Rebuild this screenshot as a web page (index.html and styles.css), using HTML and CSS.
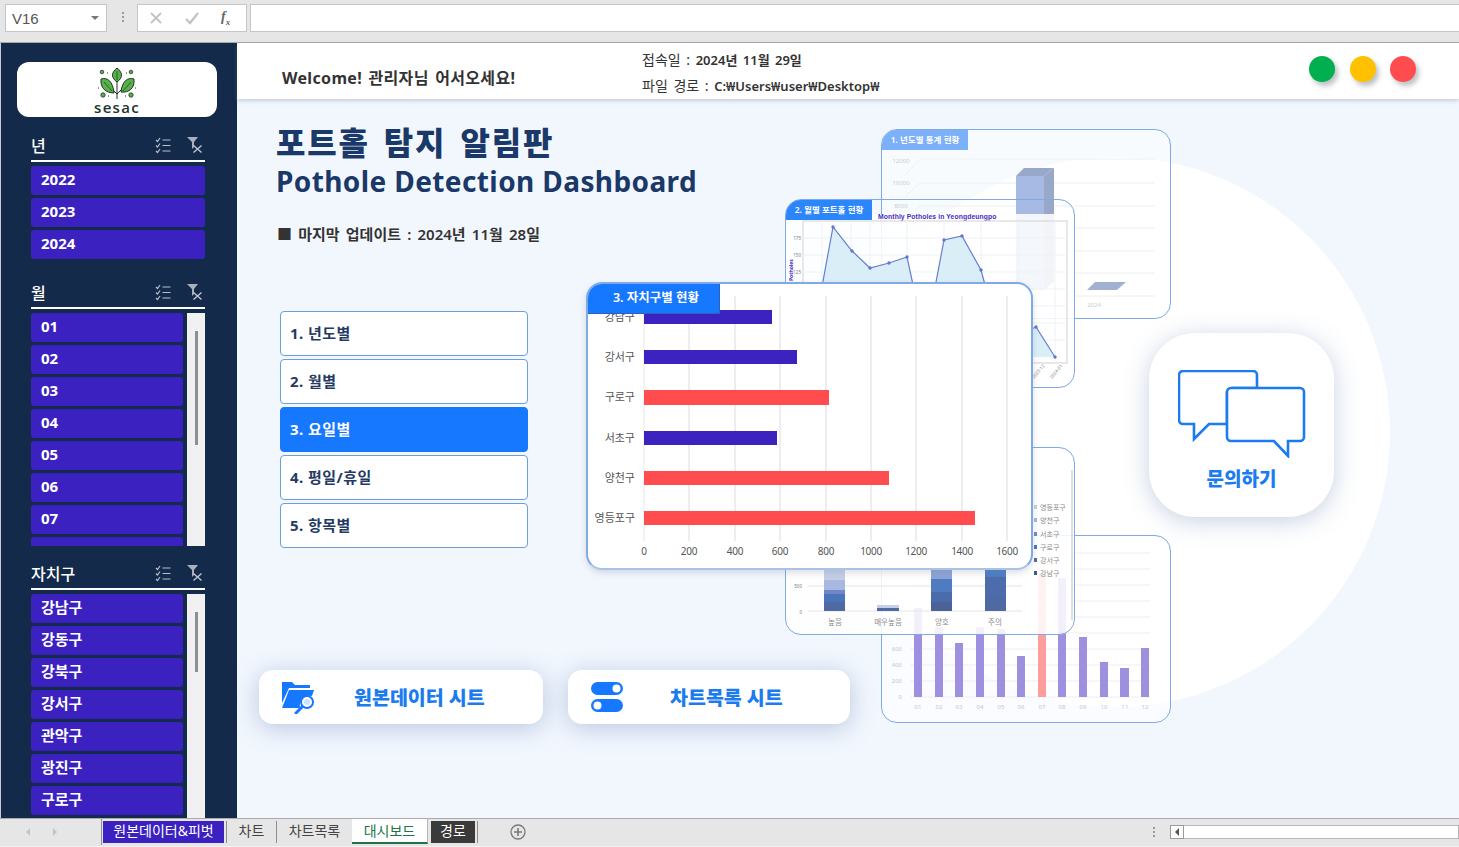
FILE: index.html
```html
<!DOCTYPE html>
<html lang="ko">
  <head>
    <meta charset="UTF-8" />
    <meta name="viewport" content="width=device-width, initial-scale=1.0" />
    <title>Pothole Detection Dashboard</title>
    <link rel="stylesheet" href="styles.css">
  </head>
  <body>
    <svg class="icon-defs" width="0" height="0">
      <defs>
        <g id="icon-multi">
          <path d="M1 3l1.500 1.500 2.500-3.500M1 8.500l1.500 1.500 2.500-3.500M1 14l1.500 1.500 2.500-3.500" fill="none" stroke="#b9bfc9" stroke-width="1.200" />
          <path d="M7.500 3h8M7.500 8.500h8M7.500 14h8" stroke="#b9bfc9" stroke-width="1.200" />
        </g>
        <g id="icon-clear">
          <path d="M0 0h11l-4 5v5l-2 2v-7z" fill="#aab0ba" />
          <path d="M6.500 8.500l8 7M14.500 8.500l-8 7" stroke="#c4c9d1" stroke-width="1.300" />
        </g>
      </defs>
    </svg>

    <div class="formula-bar">
      <div class="name-box"><span>V16</span><i class="caret"></i></div>
      <div class="grip"></div>
      <div class="formula-btns">
        <svg width="14" height="14" viewBox="0 0 14 14"><path d="M2 2l10 10M12 2L2 12" stroke="#c2c2c2" stroke-width="1.800" /></svg>
        <svg width="16" height="14" viewBox="0 0 16 14"><path d="M2 8l4 4 8-10" fill="none" stroke="#c2c2c2" stroke-width="2.200" /></svg>
        <span class="fx">f<sub>x</sub></span>
      </div>
      <div class="formula-input"></div>
    </div>

    <div class="sheet">
      <aside class="sidebar">
        <div class="logo-card">
          <svg width="42" height="33" viewBox="0 0 42 33">
            <path d="M21 32V8M21 27L11 17M21 27l10-10" fill="none" stroke="#20352a" stroke-width="1" />
            <path d="M21 1c5 4 7 9 0 14c-7-5-5-10 0-14z" fill="#58b24a" stroke="#20352a" stroke-width="1" />
            <path d="M5 12c6-2 12 2 13 14c-8 0-14-5-13-14z" fill="#58b24a" stroke="#20352a" stroke-width="1" />
            <path d="M38 12c-6-2-12 2-13 13c8 1 14-4 13-13z" fill="#58b24a" stroke="#20352a" stroke-width="1" />
            <path d="M21 4v9M8 15l8 9M35 15l-8 9" stroke="#20352a" stroke-width=".7" />
            <circle cx="6" cy="5" r="1.800" fill="#58b24a" stroke="#20352a" stroke-width=".8" />
            <circle cx="35" cy="5" r="1.800" fill="#58b24a" stroke="#20352a" stroke-width=".8" />
            <circle cx="7" cy="28" r="2.200" fill="#58b24a" stroke="#20352a" stroke-width=".8" />
            <circle cx="35" cy="28" r="2.200" fill="#58b24a" stroke="#20352a" stroke-width=".8" />
            <path d="M11 6h1M30 6h1M2 21h1M12 29h1M29 29h1M39 21h1" stroke="#20352a" stroke-width="1" />
          </svg>
          <div class="logo-text">sesac</div>
        </div>

        <section class="slicer">
          <div class="slicer-head">
            <span>년</span>
            <div class="slicer-tools">
              <svg width="17" height="17"><use href="#icon-multi" /></svg>
              <svg width="16" height="16"><use href="#icon-clear" /></svg>
            </div>
          </div>
          <div class="slicer-items">
            <div class="slicer-item">2022</div>
            <div class="slicer-item">2023</div>
            <div class="slicer-item">2024</div>
          </div>
        </section>

        <section class="slicer slicer-month">
          <div class="slicer-head">
            <span>월</span>
            <div class="slicer-tools">
              <svg width="17" height="17"><use href="#icon-multi" /></svg>
              <svg width="16" height="16"><use href="#icon-clear" /></svg>
            </div>
          </div>
          <div class="slicer-scroll">
            <div class="slicer-items">
              <div class="slicer-item">01</div>
              <div class="slicer-item">02</div>
              <div class="slicer-item">03</div>
              <div class="slicer-item">04</div>
              <div class="slicer-item">05</div>
              <div class="slicer-item">06</div>
              <div class="slicer-item">07</div>
              <div class="slicer-item"></div>
            </div>
            <div class="scroll-track"><i class="scroll-thumb"></i></div>
          </div>
        </section>

        <section class="slicer slicer-gu">
          <div class="slicer-head">
            <span>자치구</span>
            <div class="slicer-tools">
              <svg width="17" height="17"><use href="#icon-multi" /></svg>
              <svg width="16" height="16"><use href="#icon-clear" /></svg>
            </div>
          </div>
          <div class="slicer-scroll">
            <div class="slicer-items">
              <div class="slicer-item">강남구</div>
              <div class="slicer-item">강동구</div>
              <div class="slicer-item">강북구</div>
              <div class="slicer-item">강서구</div>
              <div class="slicer-item">관악구</div>
              <div class="slicer-item">광진구</div>
              <div class="slicer-item">구로구</div>
            </div>
            <div class="scroll-track"><i class="scroll-thumb short"></i></div>
          </div>
        </section>
      </aside>

      <main class="main">
        <header class="topbar">
          <div class="welcome">Welcome! 관리자님 어서오세요!</div>
          <div class="conn-info">
            <div>접속일 : <b>2024년 11월 29일</b></div>
            <div>파일 경로 : <b>C:₩Users₩user₩Desktop₩</b></div>
          </div>
          <div class="lights">
            <i class="light green"></i>
            <i class="light yellow"></i>
            <i class="light red"></i>
          </div>
        </header>

        <div class="canvas">
          <div class="bg-circle"></div>

          <div class="left-col">
            <h1 class="title-ko">포트홀 탐지 알림판</h1>
            <div class="title-en">Pothole Detection Dashboard</div>
            <div class="updated">■ 마지막 업데이트 : 2024년 11월 28일</div>

            <nav class="menu">
              <div class="menu-item">1. 년도별</div>
              <div class="menu-item">2. 월별</div>
              <div class="menu-item active">3. 요일별</div>
              <div class="menu-item">4. 평일/휴일</div>
              <div class="menu-item">5. 항목별</div>
            </nav>

            <div class="sheet-links">
              <div class="sheet-link">
                <svg width="36" height="34" viewBox="0 0 36 34">
                  <path d="M1 2h10l3 3h15v3H8L1 23z" fill="#1677ff" />
                  <path d="M8 10h25l-2 6a10 10 0 0 0-12 12H1z" fill="#1677ff" />
                  <circle cx="26" cy="22" r="6" fill="#fff" stroke="#1677ff" stroke-width="2" />
                  <circle cx="26" cy="22" r="3" fill="#cfe2ff" />
                  <path d="M21 27l-6 6" stroke="#1677ff" stroke-width="3" stroke-linecap="round" />
                </svg>
                <span>원본데이터 시트</span>
              </div>
              <div class="sheet-link second">
                <svg width="34" height="32" viewBox="0 0 34 32">
                  <rect x="1" y="1" width="32" height="13" rx="6.500" fill="#1677ff" />
                  <circle cx="26.500" cy="7.500" r="4" fill="#fff" />
                  <rect x="1" y="18" width="32" height="13" rx="6.500" fill="#1677ff" />
                  <circle cx="7.500" cy="24.500" r="4" fill="#fff" />
                </svg>
                <span>차트목록 시트</span>
              </div>
            </div>
          </div>

          <!-- chart cards, coords in the svg viewBoxes are page pixels -->
          <div class="chart-card card-year">
            <div class="card-tab tab-pale">1. 년도별 통계 현황</div>
            <svg width="288" height="188" viewBox="882 130 288 188">
              <g class="faint-grid">
                <path d="M920 159h235M920 183h235M920 206h235M920 228h235M920 251h235M920 273h235M920 296h235" />
                <path d="M905 175l15-16M905 197l15-14M905 220l15-14M905 243l15-15M905 265l15-14M905 288l15-15" />
              </g>
              <g class="faint-label" text-anchor="middle">
                <text x="901" y="163">12000</text>
                <text x="901" y="185">10000</text>
                <text x="901" y="208">8000</text>
                <text x="1094" y="307">2024</text>
              </g>
              <path d="M1016 176l8-8h30l-10 8z" fill="#8d9fc6" />
              <path d="M1044 176l10-8v114l-10 8z" fill="#8e9fc4" />
              <rect x="1016" y="176" width="28" height="114" fill="#9db3e0" />
              <path d="M1087 290l8-8h31l-9 8z" fill="#9aa9cd" />
            </svg>
          </div>

          <div class="chart-card card-bars">
            <svg width="288" height="186" viewBox="882 536 288 186">
              <g class="faint-grid">
                <path d="M910 553h240M910 569h240M910 585h240M910 601h240M910 617h240M910 633h240M910 649h240M910 665h240M910 681h240M910 697h240" />
              </g>
              <g class="faint-label" text-anchor="end">
                <text x="902" y="651">600</text>
                <text x="902" y="667">400</text>
                <text x="902" y="683">200</text>
                <text x="902" y="699">0</text>
              </g>
              <g fill="#9f8fdf">
                <rect x="914" y="608" width="8" height="89" />
                <rect x="935" y="627" width="8" height="70" />
                <rect x="955" y="643" width="8" height="54" />
                <rect x="976" y="627" width="8" height="70" />
                <rect x="997" y="629" width="8" height="68" />
                <rect x="1017" y="656" width="8" height="41" />
                <rect x="1058" y="578" width="8" height="119" />
                <rect x="1079" y="637" width="8" height="60" />
                <rect x="1100" y="662" width="8" height="35" />
                <rect x="1120" y="668" width="9" height="29" />
                <rect x="1141" y="648" width="8" height="49" />
              </g>
              <rect x="1038" y="573" width="8" height="124" fill="#ff9c9c" />
              <g class="faint-label" text-anchor="middle">
                <text x="918" y="709">01</text>
                <text x="939" y="709">02</text>
                <text x="959" y="709">03</text>
                <text x="980" y="709">04</text>
                <text x="1001" y="709">05</text>
                <text x="1021" y="709">06</text>
                <text x="1042" y="709">07</text>
                <text x="1062" y="709">08</text>
                <text x="1083" y="709">09</text>
                <text x="1104" y="709">10</text>
                <text x="1125" y="709">11</text>
                <text x="1145" y="709">12</text>
              </g>
            </svg>
          </div>

          <div class="chart-card card-month">
            <div class="card-tab">2. 월별 포트홀 현황</div>
            <svg width="288" height="187" viewBox="786 200 288 187">
              <text class="month-title" x="878" y="219">Monthly Potholes in Yeongdeungpo</text>
              <rect x="803" y="221" width="264" height="142" fill="none" stroke="#cfcfcf" stroke-width="1" />
              <path class="plot-grid" d="M803 238h264M803 255h264M803 272h264M803 289h264M803 306h264M803 323h264M803 340h264M822 221v142M851 221v142M870 221v142M907 221v142M944 221v142M981 221v142M1018 221v142M1055 221v142" />
              <path d="M806 357L814 330L833 227L852 251L870 268L889 263L907 257L925 340L944 240L962 236L981 270L1000 340L1018 335L1036 327L1055 357Z" fill="#d9eef8" />
              <path d="M806 357L814 330L833 227L852 251L870 268L889 263L907 257L925 340L944 240L962 236L981 270L1000 340L1018 335L1036 327L1055 357" fill="none" stroke="#6077cf" stroke-width="1.200" />
              <g fill="#5a6fcf">
                <circle cx="833" cy="227" r="1.700" />
                <circle cx="852" cy="251" r="1.700" />
                <circle cx="870" cy="268" r="1.700" />
                <circle cx="889" cy="263" r="1.700" />
                <circle cx="907" cy="257" r="1.700" />
                <circle cx="944" cy="240" r="1.700" />
                <circle cx="962" cy="236" r="1.700" />
                <circle cx="981" cy="270" r="1.700" />
                <circle cx="1036" cy="327" r="1.700" />
                <circle cx="1055" cy="357" r="1.700" />
              </g>
              <g class="tiny-label" text-anchor="end">
                <text x="801" y="240">175</text>
                <text x="801" y="257">150</text>
                <text x="801" y="274">125</text>
              </g>
              <text class="axis-title" transform="translate(793 281) rotate(-90)">Potholes</text>
              <g class="tiny-label">
                <text transform="translate(1034 379) rotate(-50)">2023-12</text>
                <text transform="translate(1052 379) rotate(-50)">2024-01</text>
              </g>
            </svg>
          </div>

          <div class="chart-card card-stack">
            <svg width="288" height="186" viewBox="786 448 288 186">
              <path d="M1072 470v150" stroke="#d4d4d4" stroke-width="1.500" />
              <path d="M808 611h214M808 586h214" stroke="#e4e4e8" stroke-width="1" />
              <g class="tiny-label" text-anchor="end">
                <text x="802" y="588">500</text>
                <text x="802" y="614">0</text>
              </g>
              <path d="M824 560h21v51h-21z" fill="#c4cfe8" />
              <path d="M824 580h21v31h-21z" fill="#a8b8e0" />
              <path d="M824 590h21v21h-21z" fill="#7089c6" />
              <path d="M824 594h21v17h-21z" fill="#4c74ba" />
              <path d="M824 602h21v9h-21z" fill="#4f6aa3" />
              <path d="M877 605h22v6h-22z" fill="#c4cfe8" />
              <path d="M877 608h22v3h-22z" fill="#4f6aa3" />
              <path d="M931 560h21v51h-21z" fill="#8da3d6" />
              <path d="M931 579h21v32h-21z" fill="#4f7cc0" />
              <path d="M931 592h21v19h-21z" fill="#4b6cab" />
              <path d="M931 602h21v9h-21z" fill="#4a6296" />
              <path d="M985 560h21v51h-21z" fill="#4c7cc8" />
              <path d="M985 577h21v34h-21z" fill="#4c6cab" />
              <path d="M985 597h21v14h-21z" fill="#4f6aa3" />
              <g class="stack-label" text-anchor="middle">
                <text x="835" y="625">높음</text>
                <text x="888" y="625">매우높음</text>
                <text x="942" y="625">양호</text>
                <text x="995" y="625">주의</text>
              </g>
              <g class="legend">
                <rect x="1034" y="505" width="3" height="4" fill="#c4cfe8" /><text x="1040" y="510">영등포구</text>
                <rect x="1034" y="518" width="3" height="4" fill="#a8b8e0" /><text x="1040" y="523">양천구</text>
                <rect x="1034" y="532" width="3" height="4" fill="#7089c6" /><text x="1040" y="537">서초구</text>
                <rect x="1034" y="545" width="3" height="4" fill="#4c74ba" /><text x="1040" y="550">구로구</text>
                <rect x="1034" y="558" width="3" height="4" fill="#4f6aa3" /><text x="1040" y="563">강서구</text>
                <rect x="1034" y="571" width="3" height="4" fill="#3f5a8e" /><text x="1040" y="576">강남구</text>
              </g>
            </svg>
          </div>

          <div class="chart-card card-main">
            <div class="card-tab main-tab">3. 자치구별 현황</div>
            <svg width="443" height="283" viewBox="588 284 443 283">
              <path class="main-grid" d="M689 296v245M735 296v245M780 296v245M826 296v245M871 296v245M916 296v245M962 296v245M1007 296v245" />
              <path d="M644 296v245" stroke="#e8e8e8" />
              <g fill="#3c22bf">
                <rect x="644" y="310" width="128" height="14" />
                <rect x="644" y="350" width="153" height="14" />
                <rect x="644" y="431" width="133" height="14" />
              </g>
              <g fill="#ff4d4f">
                <rect x="644" y="390" width="185" height="15" />
                <rect x="644" y="471" width="245" height="14" />
                <rect x="644" y="511" width="331" height="14" />
              </g>
              <g class="main-label" text-anchor="end">
                <text x="635" y="321">강남구</text>
                <text x="635" y="361">강서구</text>
                <text x="635" y="401">구로구</text>
                <text x="635" y="442">서초구</text>
                <text x="635" y="482">양천구</text>
                <text x="635" y="522">영등포구</text>
              </g>
              <g class="main-num" text-anchor="middle">
                <text x="644" y="555">0</text>
                <text x="689" y="555">200</text>
                <text x="735" y="555">400</text>
                <text x="780" y="555">600</text>
                <text x="826" y="555">800</text>
                <text x="871" y="555">1000</text>
                <text x="916" y="555">1200</text>
                <text x="962" y="555">1400</text>
                <text x="1007" y="555">1600</text>
              </g>
            </svg>
          </div>

          <div class="chat-btn">
            <svg width="128" height="88" viewBox="0 0 128 88">
              <path d="M5 1h70a4 4 0 0 1 4 4v13H54a5 5 0 0 0-5 5v31H31L16 69V54H5a4 4 0 0 1-4-4V5a4 4 0 0 1 4-4z" fill="#fff" stroke="#1b7cf0" stroke-width="2.600" />
              <path d="M53 18h69a4 4 0 0 1 4 4v45a4 4 0 0 1-4 4h-12v15L96 71H53a4 4 0 0 1-4-4V22a4 4 0 0 1 4-4z" fill="#fff" stroke="#1b7cf0" stroke-width="2.600" />
            </svg>
            <span>문의하기</span>
          </div>
        </div>
      </main>
    </div>

    <div class="tab-bar">
      <div class="tab-nav">
        <i class="nav-left"></i>
        <i class="nav-right"></i>
      </div>
      <div class="tabs">
        <div class="tab tab-data">원본데이터&amp;피벗</div>
        <div class="tab tab-chart">차트</div>
        <div class="tab tab-list">차트목록</div>
        <div class="tab tab-current">대시보드</div>
        <div class="tab tab-dark">경로</div>
      </div>
      <svg class="add-sheet" width="16" height="16" viewBox="0 0 16 16">
        <circle cx="8" cy="8" r="7" fill="none" stroke="#7a7a7a" stroke-width="1.300" />
        <path d="M8 4v8M4 8h8" stroke="#7a7a7a" stroke-width="1.600" />
      </svg>
      <div class="hscroll">
        <div class="grip"></div>
        <div class="hscroll-box"><i></i></div>
        <div class="hscroll-track"></div>
      </div>
    </div>
  </body>
</html>
```

FILE: styles.css
```css
* {
  box-sizing: border-box;
}
html,
body {
  margin: 0;
  height: 100%;
  overflow: hidden;
}
body {
  width: 1459px;
  height: 847px;
  font-family: "Noto Sans", "Noto Sans CJK KR", sans-serif;
  background: #e6e6e6;
  color: #333;
}
.icon-defs {
  position: absolute;
}

/* formula bar */
.formula-bar {
  display: flex;
  height: 43px;
  padding: 4px 0 0 5px;
  background: #e6e6e6;
  border-bottom: 1px solid #a9a9a9;
}
.name-box {
  display: flex;
  align-items: center;
  justify-content: space-between;
  width: 102px;
  height: 28px;
  padding: 0 7px 0 6px;
  background: #fff;
  border: 1px solid #c6c6c6;
  font-family: "Liberation Sans", sans-serif;
  font-size: 15px;
  color: #555;
}
.caret {
  border-left: 4px solid transparent;
  border-right: 4px solid transparent;
  border-top: 4px solid #777;
}
.grip {
  width: 2px;
  height: 12px;
  margin: 8px 13px 0 15px;
  background: repeating-linear-gradient(#9a9a9a 0 2px, transparent 2px 4px);
}
.formula-btns {
  display: flex;
  align-items: center;
  gap: 21px;
  width: 110px;
  height: 28px;
  padding: 0 0 0 11px;
  background: #fff;
  border: 1px solid #c6c6c6;
}
.fx {
  font-family: "Liberation Serif", serif;
  font-style: italic;
  font-weight: 700;
  font-size: 14px;
  color: #666;
}
.fx sub {
  font-size: 9px;
}
.formula-input {
  flex: 1;
  height: 28px;
  margin-left: 3px;
  background: #fff;
  border: 1px solid #c6c6c6;
  border-right: 0;
}

/* sheet */
.sheet {
  display: flex;
  height: 775px;
}
.sidebar {
  flex: none;
  width: 237px;
  height: 775px;
  padding-top: 19px;
  background: #132a4a;
  border-left: 1px solid #c7ccd4;
  overflow: hidden;
}
.logo-card {
  display: flex;
  flex-direction: column;
  align-items: center;
  width: 200px;
  height: 55px;
  margin-left: 16px;
  padding-top: 5px;
  background: #fff;
  border-radius: 12px;
}
.logo-text {
  margin-top: 0;
  font-size: 15px;
  line-height: 14px;
  letter-spacing: 1.300px;
  font-family: "Open Sans", sans-serif;
  font-weight: 600;
  color: #20352a;
}
.slicer {
  width: 174px;
  margin: 13px 0 0 30px;
}
.slicer-month {
  margin-top: 18px;
}
.slicer-gu {
  margin-top: 12px;
}
.slicer-head {
  display: flex;
  align-items: center;
  justify-content: space-between;
  height: 32px;
  color: #fff;
  font-size: 16px;
  font-weight: 500;
  border-bottom: 2px solid #fff;
}
.slicer-tools {
  display: flex;
  gap: 15px;
  margin-right: 2px;
}
.slicer-items {
  display: flex;
  flex-direction: column;
  gap: 3px;
  padding-top: 4px;
}
.slicer-item {
  flex: none;
  height: 29px;
  padding-left: 10px;
  background: #3b22c0;
  border-radius: 3px;
  color: #fff;
  font-size: 15px;
  font-weight: 700;
  line-height: 27px;
}
.slicer-scroll {
  display: flex;
  gap: 4px;
  height: 237px;
}
.slicer-scroll .slicer-items {
  flex: 1;
  overflow: hidden;
}
.slicer-gu .slicer-scroll {
  height: 228px;
}
.scroll-track {
  width: 18px;
  margin-top: 4px;
  padding: 18px 0 0 8px;
  background: #f1f1f1;
}
.scroll-thumb {
  display: block;
  width: 3px;
  height: 114px;
  background: #8f8f8f;
}
.scroll-thumb.short {
  height: 60px;
}

/* main */
.main {
  width: 1222px;
}
.topbar {
  position: relative;
  z-index: 2;
  display: flex;
  align-items: center;
  height: 56px;
  background: #fff;
  box-shadow: 0 2px 4px rgba(120, 135, 160, 0.35);
}
.welcome {
  width: 360px;
  margin: 11px 0 0 45px;
  font-size: 16px;
  font-weight: 700;
  letter-spacing: 0.330px;
  word-spacing: 2px;
  color: #333;
  white-space: nowrap;
}
.conn-info {
  font-size: 14px;
  line-height: 25px;
  margin-top: 3px;
  word-spacing: 2px;
  color: #333;
}
.conn-info b {
  font-size: 13px;
  font-weight: 600;
}
.lights {
  display: flex;
  gap: 14.500px;
  margin-left: auto;
  margin-right: 43px;
  margin-top: -4px;
}
.light {
  width: 26px;
  height: 26px;
  border-radius: 50%;
  box-shadow: 3px 4px 5px rgba(90, 100, 110, 0.4);
}
.green {
  background: #00b050;
}
.yellow {
  background: #ffc000;
}
.red {
  background: #ff4d4f;
}

.canvas {
  position: relative;
  height: 719px;
  background: #f2f7fe;
  overflow: hidden;
}
.bg-circle {
  position: absolute;
  left: 603px;
  top: 58px;
  width: 550px;
  height: 550px;
  border-radius: 50%;
  background: #fff;
}
.left-col {
  position: relative;
  width: 620px;
  padding: 24px 0 0 22px;
}
.title-ko {
  margin: 0 0 0 17px;
  font-size: 32px;
  line-height: 40px;
  font-weight: 800;
  letter-spacing: 1.800px;
  word-spacing: 4px;
  color: #1a3868;
  white-space: nowrap;
}
.title-en {
  margin-left: 17px;
  font-size: 28px;
  line-height: 36px;
  font-weight: 700;
  letter-spacing: 0.400px;
  color: #1a3868;
  white-space: nowrap;
}
.updated {
  margin: 24px 0 0 18px;
  font-size: 15px;
  line-height: 22px;
  font-weight: 600;
  word-spacing: 2.300px;
  color: #333;
}
.menu {
  display: flex;
  flex-direction: column;
  gap: 3px;
  width: 248px;
  margin: 66px 0 0 21px;
}
.menu-item {
  height: 45px;
  padding-left: 9px;
  background: #fff;
  border: 1px solid #6b9fdc;
  border-radius: 4px;
  font-size: 15px;
  font-weight: 700;
  letter-spacing: 0.450px;
  line-height: 42px;
  color: #243a63;
}
.menu-item.active {
  background: #1677ff;
  border-color: #1677ff;
  color: #fff;
}
.sheet-links {
  display: flex;
  gap: 25px;
  margin-top: 122px;
}
.sheet-link {
  flex: none;
  display: flex;
  align-items: center;
  width: 284px;
  height: 54px;
  padding-left: 22px;
  background: #fff;
  border-radius: 14px;
  box-shadow: 0 4px 24px rgba(90, 120, 170, 0.38);
}
.sheet-link span {
  margin: -2px 0 0 37px;
  font-size: 19.500px;
  font-weight: 800;
  color: #1b7cf0;
}
.sheet-link.second {
  width: 282px;
}
.sheet-link.second span {
  margin-left: 46px;
}

/* chart cards sit on a free canvas */
.chart-card {
  position: absolute;
  width: 290px;
  border: 1px solid #7eaae6;
  border-radius: 16px;
  overflow: hidden;
}
.chart-card svg {
  display: block;
}
.card-tab {
  position: absolute;
  left: 0;
  top: 0;
  width: 86px;
  height: 20px;
  background: #2c86fb;
  color: #fff;
  font-size: 8.500px;
  font-weight: 600;
  line-height: 20px;
  text-align: center;
  white-space: nowrap;
}
.card-tab.tab-pale {
  background: #7cb0f8;
}
.card-year {
  left: 644px;
  top: 30px;
  height: 190px;
  background: rgba(255, 255, 255, 0.45);
}
.card-year svg {
  opacity: 0.9;
}
.card-bars {
  left: 644px;
  top: 436px;
  height: 188px;
  background: rgba(255, 255, 255, 0.65);
}
.card-month {
  left: 548px;
  top: 100px;
  height: 189px;
  background: linear-gradient(transparent 14px, rgba(255, 255, 255, 0.88) 14px);
}
.card-month svg {
  opacity: 0.95;
}
.month-title {
  font-family: "Liberation Sans", sans-serif;
  font-size: 6.800px;
  font-weight: 700;
  letter-spacing: 0.100px;
  fill: #3b22c0;
}
.plot-grid {
  stroke: #eef1f5;
  stroke-width: 1;
  fill: none;
}
.tiny-label {
  font-size: 4.500px;
  fill: #777;
}
.axis-title {
  font-size: 5px;
  font-weight: 700;
  fill: #3b22c0;
}
.card-stack {
  left: 548px;
  top: 348px;
  height: 188px;
  background: rgba(255, 255, 255, 0.87);
}
.stack-label {
  font-size: 7.500px;
  fill: #8d8d8d;
}
.legend {
  font-size: 7px;
  fill: #8a8a8a;
}
.faint-grid {
  stroke: #eceef3;
  stroke-width: 1;
  fill: none;
}
.faint-label {
  font-size: 6px;
  fill: #c3c7cf;
}
.card-main {
  left: 349px;
  top: 183px;
  width: 447px;
  height: 288px;
  background: #fff;
  border: 2px solid #7eaae6;
  border-bottom-color: #a9c3e6;
  box-shadow: 0 3px 6px rgba(120, 130, 150, 0.25);
}
.main-tab {
  z-index: 1;
  left: -1px;
  top: 0;
  width: 133px;
  height: 30px;
  background: #1677ff;
  border-bottom: 1px solid #2a62bb;
  border-right: 1px solid #2a62bb;
  padding-left: 6px;
  font-size: 12.500px;
  font-weight: 600;
  line-height: 28px;
}
.main-grid {
  stroke: #dcdcdc;
  stroke-width: 1;
  fill: none;
}
.main-label {
  font-size: 11px;
  fill: #555;
}
.main-num {
  font-size: 10px;
  letter-spacing: -0.300px;
  fill: #555;
}
.chat-btn {
  position: absolute;
  left: 912px;
  top: 234px;
  display: flex;
  flex-direction: column;
  align-items: center;
  width: 185px;
  height: 184px;
  padding-top: 37px;
  background: #fff;
  border-radius: 46px;
  box-shadow: 0 4px 24px rgba(90, 120, 170, 0.34);
}
.chat-btn span {
  margin-top: 8px;
  font-size: 19px;
  font-weight: 800;
  line-height: 26px;
  color: #1b7cf0;
}

/* sheet tabs */
.tab-bar {
  display: flex;
  align-items: flex-start;
  height: 29px;
  background: #e6e6e6;
  border-top: 1px solid #ababab;
  border-bottom: 1px solid #f2f2f2;
}
.tab-nav {
  display: flex;
  gap: 23px;
  width: 101px;
  padding: 9px 0 0 26px;
}
.tab-nav i {
  width: 0;
  height: 0;
  border-top: 4px solid transparent;
  border-bottom: 4px solid transparent;
}
.nav-left {
  border-right: 4px solid #c4c4c4;
}
.nav-right {
  border-left: 4px solid #c4c4c4;
}
.tabs {
  flex: none;
  display: flex;
  align-items: flex-start;
  height: 26px;
  border-left: 1px solid #8d8d8d;
}
.tab {
  height: 22px;
  margin-top: 2px;
  border-right: 1px solid #8d8d8d;
  font-size: 14px;
  line-height: 19px;
  text-align: center;
  color: #444;
  white-space: nowrap;
}
.tab-data {
  width: 121px;
  margin: 2px 2px 0 1px;
  background: #3b22c0;
  color: #fff;
  border-right: 0;
}
.tab-chart {
  width: 51px;
  border-left: 1px solid #8d8d8d;
}
.tab-list {
  width: 75px;
  border-right: 0;
}
.tab-current {
  width: 76px;
  height: 25px;
  margin: 0;
  padding: 2px 0 0 0;
  background: #fff;
  border-right: 1px solid #b5b5b5;
  border-bottom: 2px solid #217346;
  color: #217346;
}
.tab-dark {
  width: 44px;
  margin: 2px 2px 0 3px;
  background: #3a3a3a;
  color: #fff;
  border-right: 0;
  box-shadow: 2px 0 0 #e6e6e6, 3px 0 0 #8d8d8d;
}
.add-sheet {
  margin: 5px 0 0 33px;
}
.hscroll {
  display: flex;
  margin-left: auto;
  width: 306px;
}
.hscroll .grip {
  margin: 8px 15px 0 0;
}
.hscroll-box {
  display: flex;
  align-items: center;
  justify-content: center;
  width: 14px;
  height: 14px;
  margin-top: 6px;
  background: #fff;
  border: 1px solid #9a9a9a;
}
.hscroll-box i {
  border-top: 4px solid transparent;
  border-bottom: 4px solid transparent;
  border-right: 4px solid #555;
}
.hscroll-track {
  flex: 1;
  height: 14px;
  margin-top: 6px;
  background: #fff;
  border: 1px solid #b5b5b5;
  border-left: 0;
}
```
